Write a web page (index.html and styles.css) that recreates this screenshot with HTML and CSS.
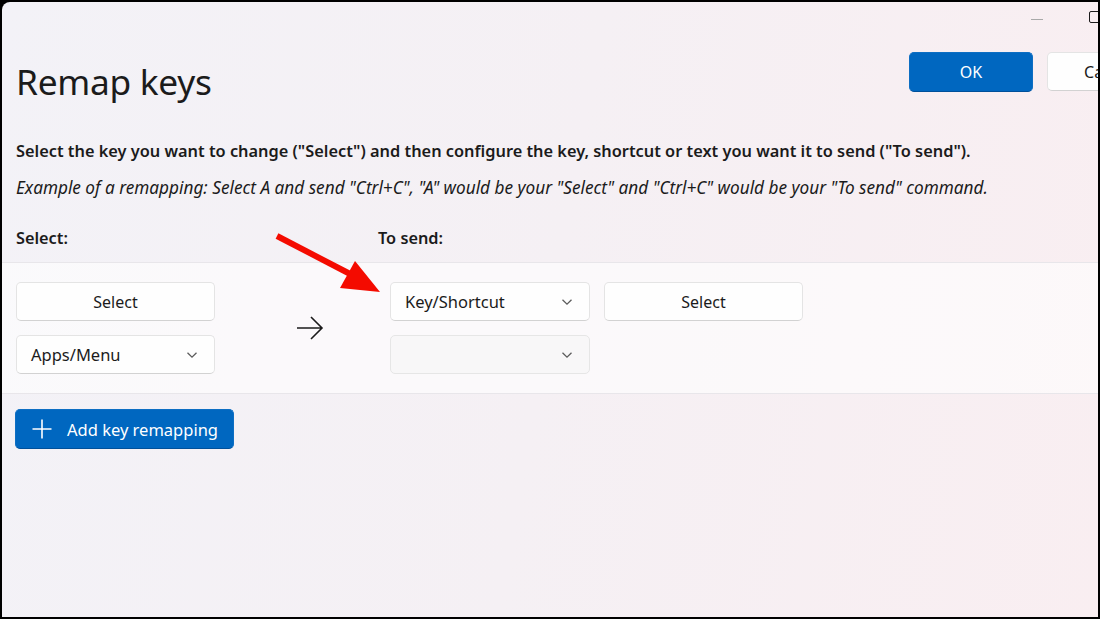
FILE: index.html
```html
<!DOCTYPE html>
<html lang="en">
<head>
    <meta charset="UTF-8">
    <title>Remap keys</title>
    <link rel="stylesheet" href="styles.css">
</head>
<body>

    <div class="window">
        <div class="titlebar">
            <span class="caption-min"></span>
            <span class="caption-max"></span>
        </div>

        <div class="header">
            <h1>Remap keys</h1>
            <div class="actions">
                <button class="btn btn-accent">OK</button>
                <button class="btn">Cancel</button>
            </div>
        </div>

        <p class="intro">Select the key you want to change ("Select") and then configure the key, shortcut or text you want it to send ("To send").</p>
        <p class="example">Example of a remapping: Select A and send "Ctrl+C", "A" would be your "Select" and "Ctrl+C" would be your "To send" command.</p>

        <div class="labels">
            <span class="label-select">Select:</span>
            <span>To send:</span>
        </div>

        <div class="panel">
            <div class="col-select">
                <button class="btn">Select</button>
                <div class="combo">
                    <span>Apps/Menu</span>
                    <svg class="chevron" viewBox="0 0 12 8"><path d="M1.5 1.8 L6 6.2 L10.5 1.8" /></svg>
                </div>
            </div>

            <div class="col-arrow">
                <svg viewBox="0 0 28 26" width="28" height="26"><path d="M1 13 H26 M15 2 L26 13 L15 24" /></svg>
            </div>

            <div class="col-send">
                <div class="combo">
                    <span>Key/Shortcut</span>
                    <svg class="chevron" viewBox="0 0 12 8"><path d="M1.5 1.8 L6 6.2 L10.5 1.8" /></svg>
                </div>
                <button class="btn">Select</button>
                <div class="combo combo-empty">
                    <span></span>
                    <svg class="chevron" viewBox="0 0 12 8"><path d="M1.5 1.8 L6 6.2 L10.5 1.8" /></svg>
                </div>
            </div>
        </div>

        <div class="footer">
            <button class="btn btn-accent btn-add">
                <svg viewBox="0 0 20 20" width="20" height="20"><path d="M10 0.5 V19.5 M0.5 10 H19.5" /></svg>
                <span>Add key remapping</span>
            </button>
        </div>

        <!-- annotation arrow -->
        <svg class="pointer" viewBox="0 0 1096 615" width="1096" height="615">
            <line x1="275" y1="234" x2="352" y2="274" />
            <polygon points="353,259 338,286 378,290" />
        </svg>
    </div>

</body>
</html>
```

FILE: styles.css
```css
body {
    margin: 0;
    background: #000;
    font-family: "Noto Sans", "Open Sans", sans-serif;
    color: #1b1b1b;
}

.window {
    position: relative;
    margin: 2px;
    height: 615px;
    overflow: hidden;
    border-top-left-radius: 8px;
    background: linear-gradient(100deg, #f3f2f7 0%, #f5f0f4 50%, #f9eef1 100%);
    display: flex;
    flex-direction: column;
}

.titlebar {
    height: 32px;
    display: flex;
    justify-content: flex-end;
    align-items: center;
    gap: 46px;
    margin-right: -3px;
}

.caption-min {
    width: 12px;
    height: 1px;
    background: #a9a9a9;
    margin-top: 2px;
}

.caption-max {
    width: 10px;
    height: 10px;
    border: 1px solid #1b1b1b;
    border-radius: 2px;
    margin-top: -3px;
}

.header {
    display: flex;
    align-items: flex-start;
    padding-left: 14px;
    margin-top: 18px;
}

h1 {
    margin: 3px 0 0;
    font-size: 35.3px;
    font-weight: 400;
    line-height: 52px;
    letter-spacing: -0.3px;
}

.actions {
    display: flex;
    gap: 14px;
    margin-left: auto;
    margin-right: -73px;
}

.btn {
    font-family: inherit;
    font-size: 16px;
    color: #1b1b1b;
    background: #fefefe;
    border: 1px solid #e4e4e4;
    border-bottom-color: #d2d2d2;
    border-radius: 5px;
    height: 39px;
    padding: 0 12px;
    width: 124px;
    white-space: nowrap;
}

.btn-accent {
    background: #0067c0;
    border-color: #0d6ec3;
    border-bottom-color: #00509a;
    color: #fff;
    height: 40px;
}

.intro {
    margin: 33px 14px 0;
    font-size: 16.35px;
    font-weight: 600;
    line-height: 22px;
    white-space: nowrap;
}

.example {
    margin: 15px 14px 0;
    font-size: 17.2px;
    font-style: italic;
    line-height: 22px;
    white-space: nowrap;
}

.labels {
    display: flex;
    margin: 28px 14px 0;
    font-size: 16.3px;
    font-weight: 600;
    line-height: 22px;
}

.label-select {
    width: 362px;
}

.panel {
    margin-top: 13px;
    background: rgba(255, 255, 255, 0.6);
    border-top: 1px solid #e8e6ea;
    border-bottom: 1px solid #e8e6ea;
    padding: 19px 14px;
    display: flex;
    align-items: flex-start;
}

.col-select {
    width: 199px;
    display: flex;
    flex-direction: column;
    gap: 14px;
}

.col-select .btn {
    width: 199px;
}

.col-arrow {
    width: 175px;
    height: 91px;
    display: flex;
    align-items: center;
    justify-content: center;
    padding-left: 14px;
    box-sizing: border-box;
}

.col-arrow path {
    fill: none;
    stroke: #1b1b1b;
    stroke-width: 1.6;
}

.col-send {
    display: grid;
    grid-template-columns: 200px 199px;
    column-gap: 14px;
    row-gap: 14px;
}

.col-send .btn {
    width: 199px;
}

.combo {
    height: 39px;
    box-sizing: border-box;
    background: #fefefe;
    border: 1px solid #e4e4e4;
    border-bottom-color: #d2d2d2;
    border-radius: 5px;
    display: flex;
    align-items: center;
    justify-content: space-between;
    padding: 0 16px 0 14px;
    font-size: 16.5px;
}

.combo-empty {
    background: #f8f7f8;
    border-color: #e6e6e6;
}

.chevron {
    width: 12px;
    height: 8px;
}

.chevron path {
    fill: none;
    stroke: #5c5c5c;
    stroke-width: 1.3;
}

.footer {
    padding: 15px 13px;
}

.btn-add {
    width: 219px;
    display: flex;
    align-items: center;
    gap: 15px;
    padding: 0 0 0 16px;
    font-size: 16.5px;
}

.btn-add path {
    fill: none;
    stroke: #fff;
    stroke-width: 1.6;
}

.pointer {
    position: absolute;
    top: 0;
    left: 0;
    pointer-events: none;
}

.pointer line {
    stroke: #f40b00;
    stroke-width: 6;
}

.pointer polygon {
    fill: #f40b00;
}
```
